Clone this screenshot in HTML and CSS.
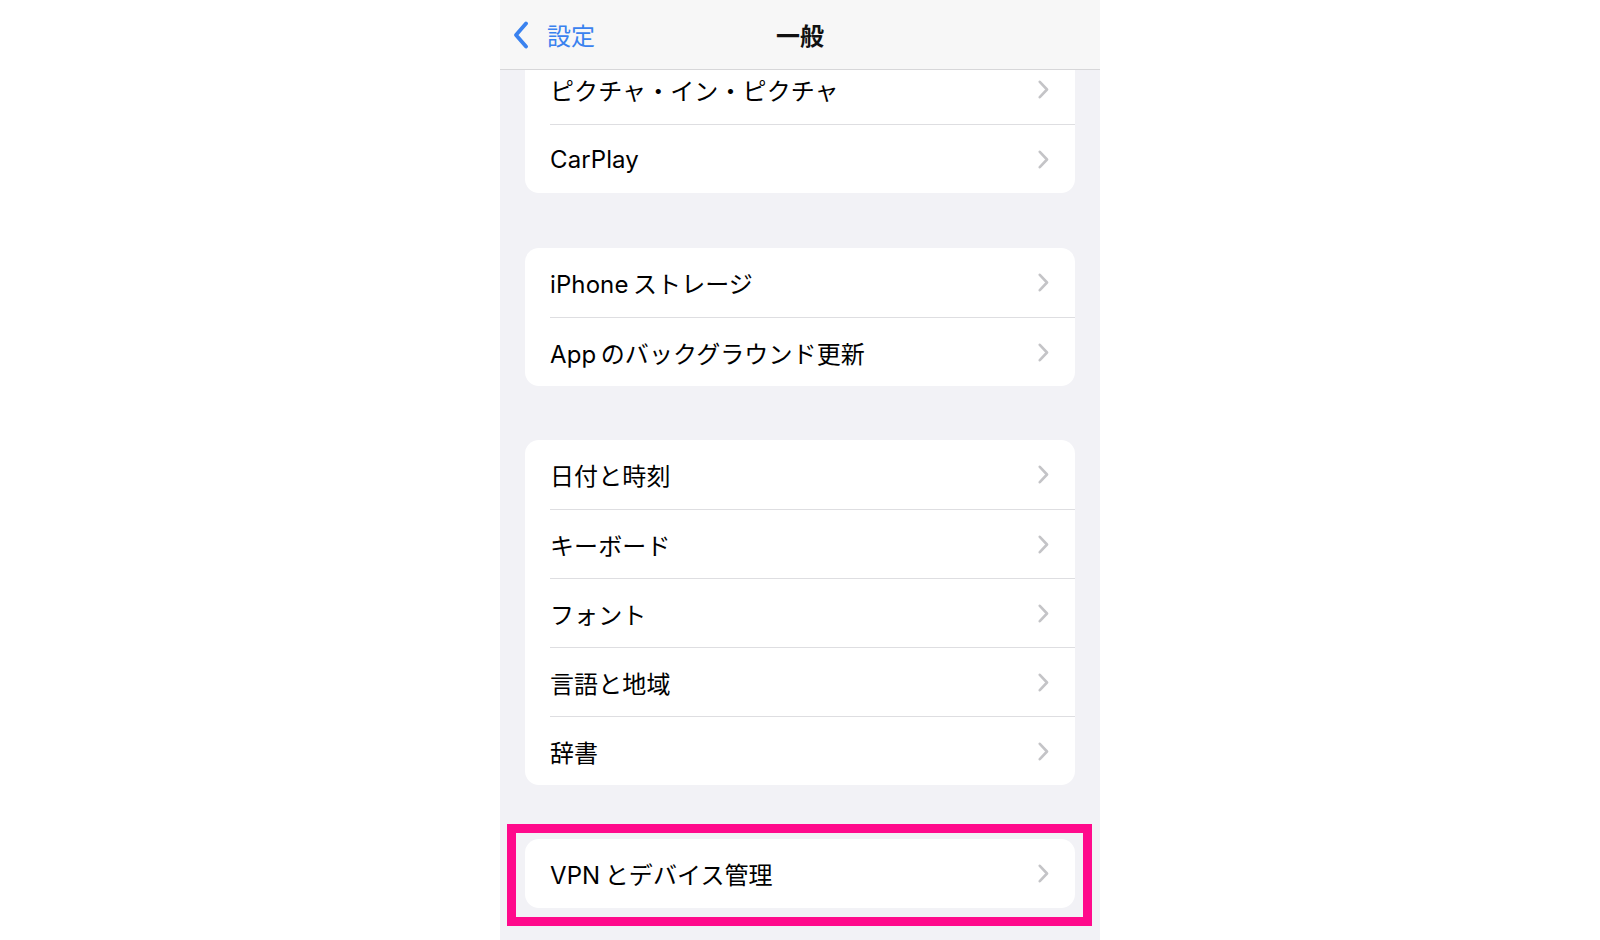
FILE: index.html
```html
<!DOCTYPE html>
<html lang="ja">
<head>
    <meta charset="UTF-8">
    <meta name="viewport" content="width=device-width, initial-scale=1.0">
    <title>一般</title>
    <link rel="stylesheet" href="styles.css">
</head>
<body>
    <div class="phone">
        <div class="nav-bar">
            <div class="nav-back">
                <svg class="back-icon" width="16" height="28" viewBox="0 0 16 28">
                    <polyline points="13,2.5 3,14 13,25.5"/>
                </svg>
                <span>設定</span>
            </div>
            <div class="nav-title">一般</div>
            <div></div>
        </div>

        <div class="content">
            <!-- 画面はスクロール済み：最初のグループは上が隠れている -->
            <div class="group group-scrolled">
                <div class="row"><span class="label">ピクチャ・イン・ピクチャ</span><svg class="chevron" viewBox="0 0 11 19"><polyline points="1.8,1.8 9,9.5 1.8,17.2"/></svg></div>
                <div class="row"><span class="label">CarPlay</span><svg class="chevron" viewBox="0 0 11 19"><polyline points="1.8,1.8 9,9.5 1.8,17.2"/></svg></div>
            </div>

            <div class="group">
                <div class="row"><span class="label">iPhone&thinsp;ストレージ</span><svg class="chevron" viewBox="0 0 11 19"><polyline points="1.8,1.8 9,9.5 1.8,17.2"/></svg></div>
                <div class="row"><span class="label">App&thinsp;のバックグラウンド更新</span><svg class="chevron" viewBox="0 0 11 19"><polyline points="1.8,1.8 9,9.5 1.8,17.2"/></svg></div>
            </div>

            <div class="group group-third">
                <div class="row"><span class="label">日付と時刻</span><svg class="chevron" viewBox="0 0 11 19"><polyline points="1.8,1.8 9,9.5 1.8,17.2"/></svg></div>
                <div class="row"><span class="label">キーボード</span><svg class="chevron" viewBox="0 0 11 19"><polyline points="1.8,1.8 9,9.5 1.8,17.2"/></svg></div>
                <div class="row"><span class="label">フォント</span><svg class="chevron" viewBox="0 0 11 19"><polyline points="1.8,1.8 9,9.5 1.8,17.2"/></svg></div>
                <div class="row"><span class="label">言語と地域</span><svg class="chevron" viewBox="0 0 11 19"><polyline points="1.8,1.8 9,9.5 1.8,17.2"/></svg></div>
                <div class="row"><span class="label">辞書</span><svg class="chevron" viewBox="0 0 11 19"><polyline points="1.8,1.8 9,9.5 1.8,17.2"/></svg></div>
            </div>

            <!-- 強調枠 -->
            <div class="highlight">
                <div class="group group-boxed">
                    <div class="row"><span class="label">VPN&thinsp;とデバイス管理</span><svg class="chevron" viewBox="0 0 11 19"><polyline points="1.8,1.8 9,9.5 1.8,17.2"/></svg></div>
                </div>
            </div>
        </div>
    </div>
</body>
</html>
```

FILE: styles.css
```css
body {
    margin: 0;
    background-color: #ffffff;
    font-family: Inter, "Noto Sans CJK JP", sans-serif;
    color: #000;
}
.phone {
    width: 600px;
    height: 940px;
    margin: 0 auto;
    background-color: #f2f2f6;
    overflow: hidden;
}
.nav-bar {
    position: relative;
    z-index: 1;
    height: 69px;
    display: grid;
    grid-template-columns: 1fr auto 1fr;
    align-items: center;
    background-color: #f7f7f7;
    border-bottom: 1px solid #d7d7d9;
}
.nav-back {
    display: flex;
    align-items: center;
    gap: 18px;
    padding-left: 13px;
    color: #3a82ef;
    font-size: 24px;
    font-family: "Noto Sans CJK JP", sans-serif;
}
.back-icon {
    fill: none;
    stroke: #3a82ef;
    stroke-width: 3.8;
    stroke-linecap: round;
    stroke-linejoin: round;
}
.nav-title {
    font-size: 24px;
    font-weight: bold;
    font-family: "Noto Sans CJK JP", sans-serif;
    color: #111;
}
.content {
    padding: 0 25px;
}
.group {
    background-color: #fff;
    border-radius: 14px;
    margin-top: 55px;
}
.group-scrolled {
    margin-top: -15px;
}
.group-third {
    margin-top: 54px;
}
.row {
    height: 69px;
    box-sizing: border-box;
    margin-left: 25px;
    padding-right: 26px;
    display: flex;
    align-items: center;
    justify-content: space-between;
}
.row + .row {
    border-top: 1px solid #dedee1;
}
.label {
    font-size: 24px;
    letter-spacing: 0.1px;
}
.chevron {
    width: 11px;
    height: 19px;
    fill: none;
    stroke: #c4c4c7;
    stroke-width: 2.6;
    stroke-linecap: round;
    stroke-linejoin: round;
}
.highlight {
    margin: 39px -17px 0 -18px;
    border: 9px solid #ff0a8c;
    padding: 6px 8px 9px 9px;
}
.group-boxed {
    margin-top: 0;
}
```
